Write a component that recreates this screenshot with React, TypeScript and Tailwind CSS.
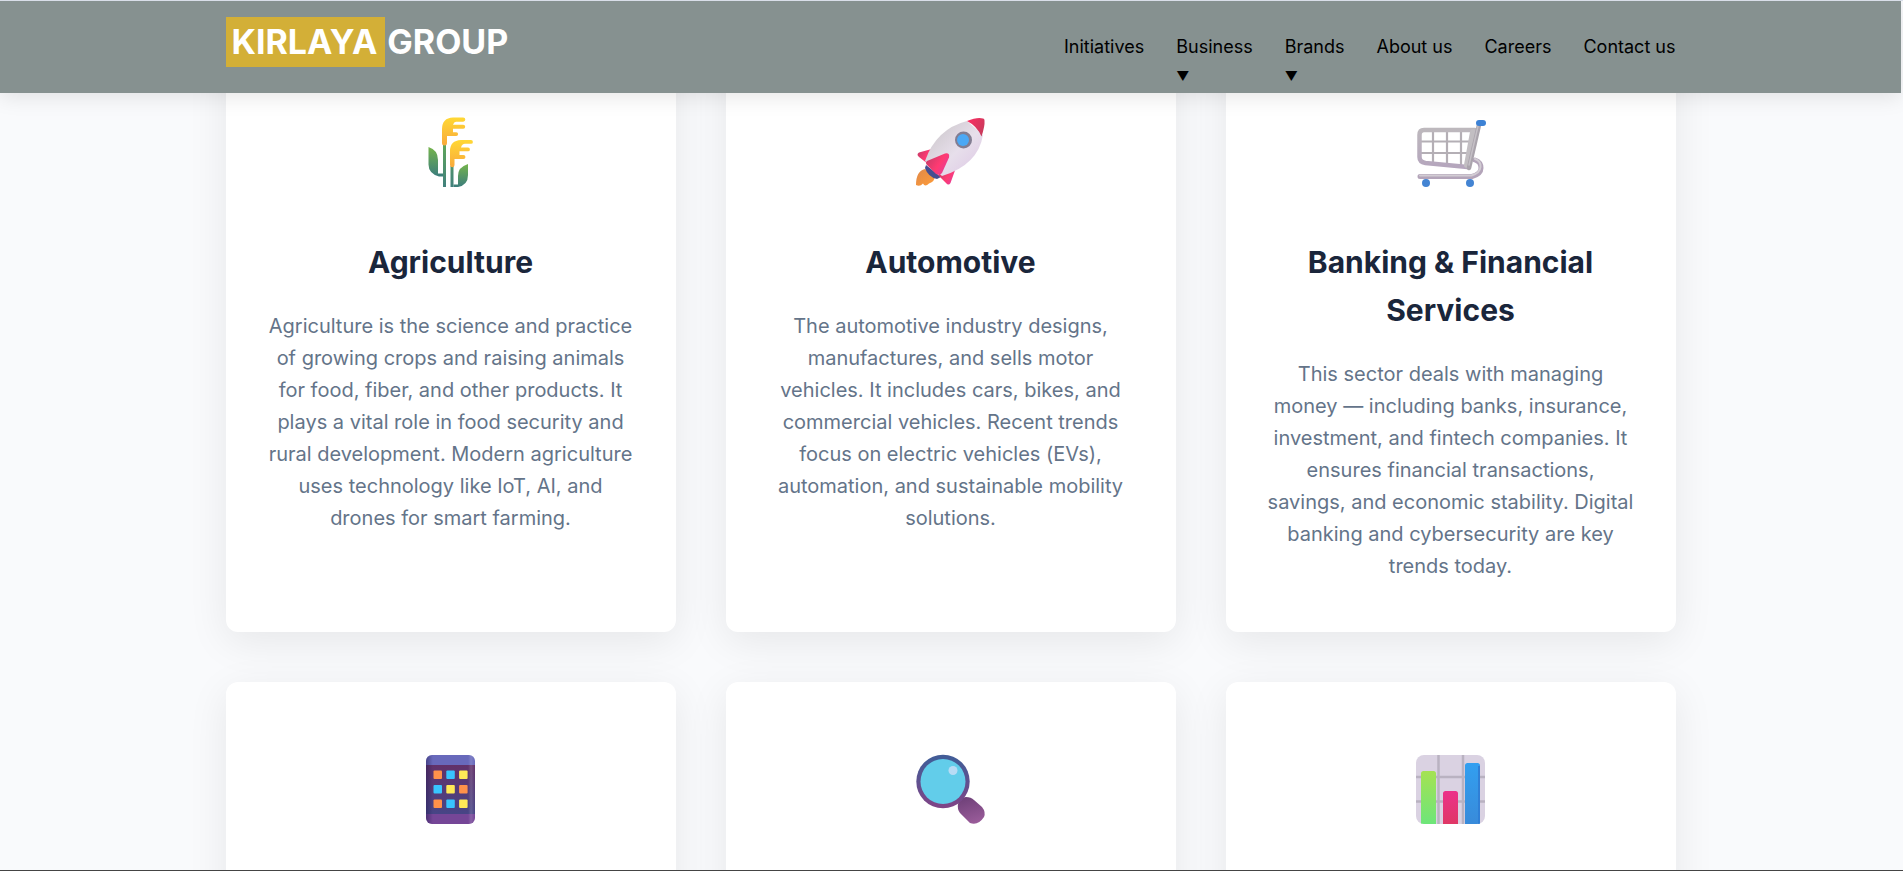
import React from "react";

function Wheat() {
  return (
    <svg viewBox="1 1 100 100" className="size-[100px]" aria-hidden="true">
      <defs>
        <linearGradient id="leaf" x1="0" y1="0" x2="0" y2="1">
          <stop offset="0" stopColor="#75b44c" />
          <stop offset="1" stopColor="#3b7d7c" />
        </linearGradient>
        <linearGradient id="stem" gradientUnits="userSpaceOnUse" x1="0" y1="44" x2="0" y2="87">
          <stop offset="0" stopColor="#5fa65a" />
          <stop offset="1" stopColor="#41807c" />
        </linearGradient>
        <linearGradient id="grain" x1="0" y1="0" x2="0" y2="1">
          <stop offset="0" stopColor="#ffd834" />
          <stop offset="1" stopColor="#f9a93c" />
        </linearGradient>
      </defs>
      <path d="M43 44h3v43h-3zM50.500 66h3v21h-3z" fill="url(#stem)" />
      <path d="M28.500 47q9.500 3 9.500 13v13.500h5v3h-4q-10.500-3-10.500-12z" fill="url(#leaf)" />
      <path d="M68 64q-10 3-10 12v8.500h-4.500V87h4.500q10-2 10-12z" fill="url(#leaf)" />
      <path d="M42 43V29Q42 18 53 17.500h10.200a2.100 2.100 0 0 1 0 4.200H56q-2 0-3 3h10.200a2 2 0 0 1 0 4H53v3.500h3.200a1.900 1.900 0 0 1 0 3.800H47V43a2.400 2.400 0 0 1-5 0z" fill="url(#grain)" />
      <path d="M50 65V51Q50 40.500 61 40h10a1.900 1.900 0 0 1 0 3.800h-6q-3 0-4 3.700h7a1.900 1.900 0 0 1 0 3.800h-8.500V55h4a1.900 1.900 0 0 1 0 3.900h-9V65a2.200 2.200 0 0 1-4.500 0z" fill="url(#grain)" />
    </svg>
  );
}

function Rocket() {
  return (
    <svg viewBox="1 1 100 100" className="size-[100px]" aria-hidden="true">
      <defs>
        <linearGradient id="hull" x1="0" y1="0" x2="1" y2="1">
          <stop offset="0.200" stopColor="#d2ccd2" />
          <stop offset="0.550" stopColor="#e7dfeb" />
          <stop offset="1" stopColor="#dcc4e4" />
        </linearGradient>
        <linearGradient id="fin" x1="0" y1="0.200" x2="1" y2="0.800">
          <stop offset="0" stopColor="#c83b68" />
          <stop offset="0.550" stopColor="#ff3a72" />
          <stop offset="1" stopColor="#e03fa0" />
        </linearGradient>
        <linearGradient id="nose" x1="0" y1="0" x2="1" y2="0.600">
          <stop offset="0" stopColor="#ff2d62" />
          <stop offset="1" stopColor="#c93a5c" />
        </linearGradient>
        <linearGradient id="flame" x1="0" y1="0" x2="1" y2="1">
          <stop offset="0" stopColor="#e0894a" />
          <stop offset="1" stopColor="#ff9c38" />
        </linearGradient>
      </defs>
      <path d="M25 69q-9 2-9 16 4 2 7-1.500 2 4 6 0 6-2 6-8z" fill="url(#flame)" />
      <path d="M26 65l15 12-4 2q-9-2-12-11z" fill="#454e91" />
      <path d="M33.500 48.500L19 52.500q-3 2 0 4.500l9 7z" fill="url(#fin)" />
      <path d="M55.500 69L50.500 83q-2 3-4.500 0l-8-8 8-6z" fill="url(#fin)" />
      <path d="M25 61Q36 29 67 21l16 14Q78 65 42 76z" fill="url(#hull)" />
      <path d="M67 21q10-4 16-2.500 1.500 0 1.500 2Q85 26 81.500 36.500 77 26 67 21z" fill="url(#nose)" />
      <circle cx="63.500" cy="40" r="8.500" fill="#827d92" />
      <circle cx="63" cy="40" r="6" fill="#4ba8f5" />
      <path d="M27 61l18-7.500q5-1 4 4L42 73q-2 3-6 1l-9-9q-2-2 0-4z" fill="url(#fin)" />
    </svg>
  );
}

function Cart() {
  return (
    <svg viewBox="1 1 100 100" className="size-[100px]" aria-hidden="true">
      <defs>
        <linearGradient id="metal" x1="0" y1="0" x2="0" y2="1">
          <stop offset="0" stopColor="#bdb8bd" />
          <stop offset="1" stopColor="#b5a6bd" />
        </linearGradient>
      </defs>
      <g fill="none" strokeLinecap="round" strokeLinejoin="round">
        <path d="M75 60q6 2 6 8t-9 8.500H20" stroke="#b3a4b9" strokeWidth="5" />
        <path d="M75 59q6 2 5.500 8t-9 8.500H20" stroke="#d2ccd3" strokeWidth="2" />
        <path d="M33 31v32M47 31v33M61 31v34M21 41.500h51M21 53h49" stroke="#b4afb5" strokeWidth="2.200" />
        <path d="M75 30H24q-4.500 0-4.500 5v22q0 5 6 6l42 4" stroke="url(#metal)" strokeWidth="4.500" />
        <path d="M73 32l-6 33" stroke="#c2bec2" strokeWidth="6" />
        <path d="M79 25l-10 43" stroke="#aaa4ac" strokeWidth="4.500" />
        <path d="M78 26l-9 39" stroke="#c5c0c6" strokeWidth="1.500" />
      </g>
      <rect x="76" y="20" width="10" height="6" rx="3" fill="#3d82d5" />
      <circle cx="26" cy="83" r="4" fill="#4384d3" />
      <circle cx="70" cy="83" r="4" fill="#4384d3" />
    </svg>
  );
}

const keys = ["#ff914a", "#38c5ff", "#ffe957", "#38c5ff", "#ffe957", "#ff914a", "#ff914a", "#38c5ff", "#ffe957"];

function Phone() {
  return (
    <svg viewBox="1 -3 100 100" className="size-[100px]" aria-hidden="true">
      <defs>
        <linearGradient id="screen" x1="0" y1="0" x2="0" y2="1">
          <stop offset="0" stopColor="#623169" />
          <stop offset="1" stopColor="#474586" />
        </linearGradient>
        <linearGradient id="sheen" x1="0" y1="0" x2="1" y2="0">
          <stop offset="0" stopColor="#251c55" stopOpacity="0.500" />
          <stop offset="0.140" stopColor="#251c55" stopOpacity="0" />
          <stop offset="0.860" stopColor="#ffffff" stopOpacity="0" />
          <stop offset="0.920" stopColor="#ffffff" stopOpacity="0.150" />
          <stop offset="1" stopColor="#ffffff" stopOpacity="0" />
        </linearGradient>
        <clipPath id="phone-body"><rect x="26" y="14" width="49" height="69" rx="6" /></clipPath>
      </defs>
      <g clipPath="url(#phone-body)">
        <rect x="26" y="14" width="49" height="10" fill="#6869bb" />
        <rect x="26" y="24" width="49" height="49" fill="url(#screen)" />
        <rect x="26" y="73" width="49" height="10" fill="#754697" />
        <rect x="26" y="14" width="49" height="69" fill="url(#sheen)" />
      </g>
      {keys.map((color, i) => (
        <rect key={i} x={33.500 + (i % 3) * 12.800} y={29.500 + Math.floor(i / 3) * 14.500} width="8.500" height="8.500" rx="1" fill={color} />
      ))}
    </svg>
  );
}

function Magnifier() {
  return (
    <svg viewBox="1 -3 100 100" className="size-[100px]" aria-hidden="true">
      <defs>
        <linearGradient id="rim" x1="0" y1="0" x2="0" y2="1">
          <stop offset="0.100" stopColor="#435c97" />
          <stop offset="1" stopColor="#814486" />
        </linearGradient>
        <linearGradient id="handle" x1="0.300" y1="0" x2="0.600" y2="1">
          <stop offset="0" stopColor="#6f4179" />
          <stop offset="1" stopColor="#9a5c9a" />
        </linearGradient>
      </defs>
      <path d="M58 63q2-7 8-7 5 0 8 3l8 7q4 5 2 10-6 9-14 6L60 72q-3-4-2-9z" fill="url(#handle)" />
      <circle cx="43" cy="40.500" r="26.700" fill="url(#rim)" />
      <circle cx="43" cy="40.500" r="22.500" fill="#62cdea" />
      <ellipse cx="53" cy="29.500" rx="4.500" ry="4.500" fill="#b7dcf5" />
    </svg>
  );
}

function BarChart() {
  return (
    <svg viewBox="1 -3 100 100" className="size-[100px]" aria-hidden="true">
      <defs>
        <linearGradient id="bar-green" x1="0" y1="0" x2="0" y2="1">
          <stop offset="0" stopColor="#a5e252" />
          <stop offset="1" stopColor="#68e67d" />
        </linearGradient>
        <linearGradient id="bar-pink" x1="0" y1="0" x2="0" y2="1">
          <stop offset="0" stopColor="#ec318a" />
          <stop offset="1" stopColor="#dd3860" />
        </linearGradient>
        <linearGradient id="bar-blue" x1="0" y1="0" x2="0" y2="1">
          <stop offset="0" stopColor="#329ff0" />
          <stop offset="1" stopColor="#3989d8" />
        </linearGradient>
        <clipPath id="chart-body"><rect x="16" y="14" width="69" height="69" rx="8" /></clipPath>
      </defs>
      <g clipPath="url(#chart-body)">
        <rect x="16" y="14" width="69" height="69" fill="#dad2e2" />
        <path d="M16 36h69M16 60.500h69M38.500 14v69M63 14v69" stroke="#b9b2c1" strokeWidth="2.500" />
        <rect x="21" y="30" width="15" height="58" rx="2.500" fill="url(#bar-green)" />
        <rect x="43" y="50" width="15" height="38" rx="2.500" fill="url(#bar-pink)" />
        <rect x="65" y="22" width="15" height="66" rx="2.500" fill="url(#bar-blue)" />
        <path d="M79 25v58" stroke="#2f7fd6" strokeWidth="2" />
      </g>
    </svg>
  );
}

const sectors = [
  {
    icon: <Wheat />,
    title: "Agriculture",
    text: "Agriculture is the science and practice of growing crops and raising animals for food, fiber, and other products. It plays a vital role in food security and rural development. Modern agriculture uses technology like IoT, AI, and drones for smart farming.",
  },
  {
    icon: <Rocket />,
    title: "Automotive",
    text: "The automotive industry designs, manufactures, and sells motor vehicles. It includes cars, bikes, and commercial vehicles. Recent trends focus on electric vehicles (EVs), automation, and sustainable mobility solutions.",
  },
  {
    icon: <Cart />,
    title: "Banking & Financial Services",
    text: "This sector deals with managing money — including banks, insurance, investment, and fintech companies. It ensures financial transactions, savings, and economic stability. Digital banking and cybersecurity are key trends today.",
  },
  { icon: <Phone /> },
  { icon: <Magnifier /> },
  { icon: <BarChart /> },
];

const links = [
  { label: "Initiatives" },
  { label: "Business", menu: true },
  { label: "Brands", menu: true },
  { label: "About us" },
  { label: "Careers" },
  { label: "Contact us" },
];

export default function App() {
  return (
    <div className="h-screen overflow-hidden border-t border-b border-t-[#d9dee9] border-b-[#444444] bg-[#f9fafc] pr-[2px] font-['Inter',sans-serif]">
      <header className="relative z-10 bg-[#869190] shadow-[0_4px_20px_rgba(0,0,0,0.1)]">
        <div className="mx-auto flex h-[92px] max-w-[1450px] items-start justify-between pt-4">
          <a href="#home" className="flex items-center text-[34px] leading-[50px] font-bold text-white">
            <span className="bg-[#d3af37] pr-2 pl-[6px]">KIRLAYA</span>
            <span className="pl-[2px]">GROUP</span>
          </a>
          <nav className="flex gap-8 pt-[15px] text-[18px] leading-[30px] text-black">
            {links.map((link) => (
              <a key={link.label} href="#" className="block">
                {link.label}
                {link.menu && <span className="block text-[13px] leading-7">▼</span>}
              </a>
            ))}
          </nav>
        </div>
      </header>
      <main className="mx-auto -mt-12 grid max-w-[1450px] grid-cols-3 gap-[50px]">
        {sectors.map((sector, i) => (
          <article key={i} className="min-h-[587px] rounded-xl bg-white px-10 py-[50px] text-center shadow-[0_10px_40px_rgba(0,0,0,0.08)]">
            <div className="mb-[31px] flex h-28 items-center justify-center">{sector.icon}</div>
            {sector.title && <h3 className="mb-6 text-[30px] leading-[48px] font-bold text-[#1a263b]">{sector.title}</h3>}
            {sector.text && <p className="text-[20px] leading-8 text-[#647489]">{sector.text}</p>}
          </article>
        ))}
      </main>
    </div>
  );
}
